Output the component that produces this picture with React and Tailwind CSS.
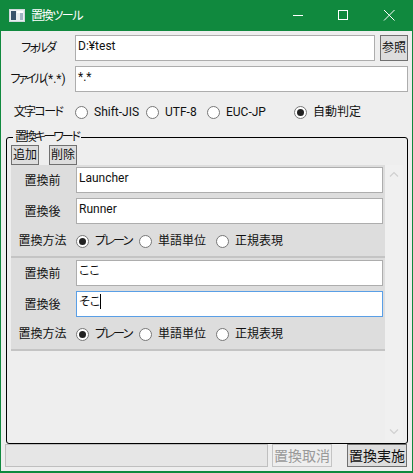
import React from "react";

const FONT = "font-['Roboto','Noto_Sans_CJK_JP',sans-serif] [font-feature-settings:'palt']";

function Radio({ label, checked, className = "", labelClass = "" }) {
  return (
    <div className={`flex items-center gap-[6px] shrink-0 ${className}`}>
      <span className="w-[13px] h-[13px] rounded-full border border-[#777] bg-white flex items-center justify-center shrink-0">
        {checked && <span className="w-[7px] h-[7px] rounded-full bg-[#222]" />}
      </span>
      <span className={`whitespace-nowrap ${labelClass}`}>{label}</span>
    </div>
  );
}

function Field({ value, focused, caret, className = "" }) {
  return (
    <div
      className={`h-[26px] border-[1px] bg-white px-[2px] pt-[2px] text-[12px] leading-[16px] text-[#111] ${
        focused ? "border-[#5a9fe6]" : "border-[#adadad]"
      } ${className}`}
    >
      {value}
      {caret && <span className="inline-block w-px h-[15px] bg-black align-top" />}
    </div>
  );
}

function Btn({ children, className = "", disabled }) {
  return (
    <div
      className={`flex items-center justify-center border whitespace-nowrap ${
        disabled ? "bg-[#eeeeee] border-[#c4c4c4] text-[#999]" : "bg-[#dddddd] border-[#707070] text-[#111]"
      } ${className}`}
    >
      {children}
    </div>
  );
}

function Entry({ before, after, focused, caret }) {
  return (
    <div className="bg-[#dddddd] border-b-2 border-[#c4c4c4] pt-[2px] h-[93px]">
      <div className="flex items-center h-[26px]">
        <div className="w-[65px] pr-[2px] text-center pt-[2px]">置換前</div>
        <Field value={before} className="w-[307px]" />
      </div>
      <div className="flex items-center h-[26px] mt-[5px]">
        <div className="w-[65px] pr-[2px] text-center pt-[2px]">置換後</div>
        <Field value={after} focused={focused} caret={caret} className="w-[307px]" />
      </div>
      <div className="flex items-center mt-[8px] h-[18px]">
        <div className="w-[65px] pr-[2px] text-center">置換方法</div>
        <Radio label="プレーン" checked className="w-[63px]" labelClass="tracking-[-1.75px]" />
        <Radio label="単語単位" className="w-[77px]" />
        <Radio label="正規表現" />
      </div>
    </div>
  );
}

export default function App() {
  return (
    <div className={`w-[413px] h-[473px] bg-[#eeeeee] border-x border-b-2 border-[#10893e] flex flex-col text-[12px] leading-[16px] text-[#111] ${FONT}`}>
      {/* Title bar */}
      <div className="h-[31px] -mx-px bg-[#10893e] flex items-center shrink-0 text-white">
        <svg width="16" height="13" viewBox="0 0 16 13" className="ml-[9px]">
          <rect x="0.5" y="0.5" width="15" height="12" fill="#e8eef0" stroke="#cfd8dc" />
          <rect x="2" y="2" width="5" height="9" fill="#37536b" />
          <rect x="8" y="2" width="6" height="2" fill="#ffffff" />
          <rect x="11" y="4" width="3" height="7" fill="#9fb4c2" />
        </svg>
        <span className="ml-[6px] tracking-[-1.4px]">置換ツール</span>
        <div className="ml-auto w-[120px] h-[31px]">
          <svg width="120" height="31" viewBox="0 0 120 31" className="block" fill="none" stroke="#fff">
            <path d="M0 15.5H10" />
            <rect x="45.5" y="10.5" width="9" height="9" />
            <path d="M91 10L101.5 20.5M101.5 10L91 20.5" />
          </svg>
        </div>
      </div>

      {/* Body */}
      <div className="flex-1 flex flex-col min-h-0">
        <div className="flex mt-[4px] h-[26px]">
          <div className="w-[74px] text-center pt-[5px] tracking-[-2px]">フォルダ</div>
          <Field value="D:¥test" className="w-[300px]" />
          <Btn className="w-[28px] h-[26px] ml-[5px]">参照</Btn>
        </div>
        <div className="flex mt-[5px] h-[26px]">
          <div className="w-[74px] text-center pt-[5px]">
            <span className="tracking-[-2px]">ファイル</span>
            <span>(*.*)</span>
          </div>
          <Field value="*.*" className="w-[333px]" />
        </div>
        <div className="flex items-center mt-[12px] h-[16px]">
          <div className="w-[74px] text-center tracking-[-1.6px]">文字コード</div>
          <Radio label="Shift-JIS" className="w-[71px]" />
          <Radio label="UTF-8" className="w-[61px]" />
          <Radio label="EUC-JP" className="w-[87px]" />
          <Radio label="自動判定" checked />
        </div>

        <fieldset className="ml-[5px] w-[402px] h-[315px] mt-[9px] border-[1.5px] border-black rounded-[3px] px-[4px] pb-[1px] min-w-0">
          <legend className="ml-[2px] px-[2px] text-[#111] leading-[16px] tracking-[-2.2px]">置換キーワード</legend>
          <div className="flex gap-[10px] h-[20px]">
            <Btn className="w-[28px] h-[20px]">追加</Btn>
            <Btn className="w-[28px] h-[20px]">削除</Btn>
          </div>
          <div className="flex h-[276px]">
            <div className="w-[374px]">
              <Entry before="Launcher" after="Runner" />
              <Entry before="ここ" after="そこ" focused caret />
            </div>
            <div className="w-[18px] bg-[#f0f0f0] flex flex-col items-center justify-between py-[6px]">
              <svg width="10" height="6" viewBox="0 0 10 6" fill="none" stroke="#d0d0d0" strokeWidth="1.2">
                <path d="M1 5.5L5 1.5L9 5.5" />
              </svg>
              <svg width="10" height="6" viewBox="0 0 10 6" fill="none" stroke="#d0d0d0" strokeWidth="1.2">
                <path d="M1 0.5L5 4.5L9 0.5" />
              </svg>
            </div>
          </div>
        </fieldset>

        <div className="flex h-[23px] pl-[4px] text-[14px]">
          <div className="w-[263px] bg-[#e6e6e6] border border-[#bfbfbf]" />
          <Btn disabled className="w-[60px] ml-[4px]">置換取消</Btn>
          <Btn className="w-[60px] ml-[15px]">置換実施</Btn>
        </div>
      </div>
    </div>
  );
}
